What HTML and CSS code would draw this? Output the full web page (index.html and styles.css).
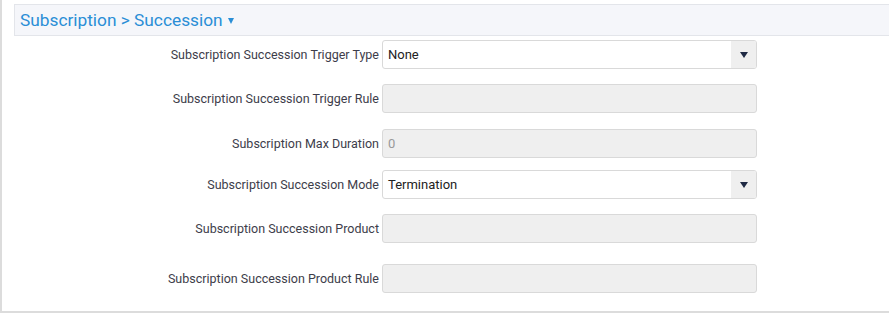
FILE: index.html
```html
<!DOCTYPE html>
<html>
<head>
<meta charset="utf-8">
<link rel="stylesheet" href="styles.css">
</head>
<body>
<div class="panel">
  <div class="header">
    <span class="title">Subscription &gt; Succession</span>
    <span class="caret"></span>
  </div>
  <div class="form">
    <div class="row r1">
      <label class="lbl">Subscription Succession Trigger Type</label>
      <div class="field select"><span class="val">None</span><span class="btn"><span class="tri"></span></span></div>
    </div>
    <div class="row r2">
      <label class="lbl">Subscription Succession Trigger Rule</label>
      <div class="field disabled"></div>
    </div>
    <div class="row r3">
      <label class="lbl">Subscription Max Duration</label>
      <div class="field disabled"><span class="val muted">0</span></div>
    </div>
    <div class="row r4">
      <label class="lbl">Subscription Succession Mode</label>
      <div class="field select"><span class="val">Termination</span><span class="btn"><span class="tri"></span></span></div>
    </div>
    <div class="row r5">
      <label class="lbl">Subscription Succession Product</label>
      <div class="field disabled"></div>
    </div>
    <div class="row r6">
      <label class="lbl">Subscription Succession Product Rule</label>
      <div class="field disabled"></div>
    </div>
  </div>
</div>
</body>
</html>
```
FILE: styles.css
```css
html, body {
  margin: 0;
  padding: 0;
  background: #fff;
  font-family: Roboto, "Liberation Sans", sans-serif;
}
.panel {
  width: 875px;
  height: 307px;
  border-left: 2px solid #dcdcdc;
  border-bottom: 2px solid #dcdcdc;
  padding: 4px 0 0 12px;
  box-sizing: content-box;
  overflow: hidden;
}
.header {
  width: 900px;
  background: #f5f6fa;
  border: 1px solid #e3e5ea;
  box-sizing: border-box;
  height: 32px;
  display: flex;
  align-items: center;
  padding-left: 5px;
  color: #2a8ed6;
}
.title {
  font-size: 17.3px;
}
.caret {
  width: 0;
  height: 0;
  border-left: 3.5px solid transparent;
  border-right: 3.5px solid transparent;
  border-top: 6px solid #2a8ed6;
  margin-left: 5px;
  margin-top: 2px;
}
.form {
  display: flex;
  flex-direction: column;
}
.row {
  display: flex;
  align-items: center;
}
.r1 { margin-top: 4px; }
.r2 { margin-top: 15px; }
.r3 { margin-top: 16px; }
.r4 { margin-top: 12px; }
.r5 { margin-top: 15px; }
.r6 { margin-top: 21px; }
.lbl {
  width: 365px;
  text-align: right;
  font-size: 12.5px;
  color: #3d3d4a;
  padding-right: 3px;
  box-sizing: content-box;
  white-space: nowrap;
}
.field {
  width: 375px;
  height: 29px;
  box-sizing: border-box;
  border: 1px solid #d9d9d9;
  border-radius: 3px;
  display: flex;
  align-items: center;
  overflow: hidden;
}
.field.select { background: #fff; }
.field.disabled { background: #efefef; }
.val {
  flex: 1;
  padding-left: 5px;
  font-size: 13px;
  color: #222;
  margin-top: -1px;
}
.val.muted { color: #999; }
.btn {
  width: 25px;
  height: 100%;
  background: #efefef;
  display: flex;
  align-items: center;
  justify-content: center;
}
.tri {
  width: 0;
  height: 0;
  border-left: 4px solid transparent;
  border-right: 4px solid transparent;
  border-top: 6px solid #1f2a44;
}
```
